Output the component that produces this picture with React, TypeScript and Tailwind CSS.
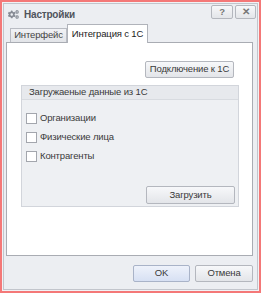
import { FaCogs } from "react-icons/fa";

const txt = "text-[9.5px] tracking-[-0.15px]";

const btn = `flex items-center justify-center whitespace-nowrap rounded-[2px] border border-[#b4b7be] bg-gradient-to-b from-[#f7f8fa] to-[#e3e5e9] text-[#3a3a3a] ${txt}`;

const Check = ({ label }: { label: string }) => (
  <div className="flex h-[19px] items-center">
    <span className="h-[11px] w-[11px] border border-[#a3a6ad] bg-white" />
    <span className={`ml-[3px] whitespace-nowrap text-[#3a3a3a] ${txt}`}>{label}</span>
  </div>
);

export default function App() {
  return (
    <div
      className="h-[293px] w-[261px] border-2 border-[#f47878] bg-[#f1f2f5] p-px"
      style={{ fontFamily: '"Liberation Sans", Arial, sans-serif' }}
    >
      <div className="flex h-full flex-col border border-[#c2c5cc] bg-[#eceef2]">
        {/* title bar */}
        <div className="flex h-[18px] items-start pl-[4px] pr-px pt-px">
          <div className="mt-[2px] flex items-center">
            <FaCogs className="text-[#868b94]" size={11} />
            <span className="ml-[5px] text-[10px] font-bold tracking-[-0.2px] text-[#50545c]">Настройки</span>
          </div>
          <div className="ml-auto flex gap-[2px]">
            <div className={`${btn} h-[14px] w-[22px] font-bold text-[#777]`}>?</div>
            <div className={`${btn} h-[14px] w-[21px] font-bold text-[#777]`}>✕</div>
          </div>
        </div>

        {/* tabs */}
        <div className="mt-[2px] flex items-end pl-[6px]">
          <div className={`flex h-[14px] w-[57px] items-center justify-center whitespace-nowrap border border-b-0 border-[#b9bcc3] bg-gradient-to-b from-[#f1f2f5] to-[#e2e4e8] text-[#444] ${txt}`}>
            Интерфейс
          </div>
          <div className={`relative z-10 -mb-px flex h-[19px] w-[81px] items-center justify-center whitespace-nowrap border border-b-0 border-[#b0b3ba] bg-white text-[#222] ${txt}`}>
            Интеграция с 1С
          </div>
        </div>

        {/* panel */}
        <div className="ml-[2px] mr-[4px] flex h-[214px] flex-col border border-[#a9acb3] bg-white">
          <div className="ml-[14px] flex w-[218px] flex-col">
            <div className={`${btn} mr-[5px] mt-[18px] h-[17px] w-[89px] self-end`}>Подключение к 1С</div>
            <div className="mt-[7px] flex h-[122px] flex-col border border-[#d2d5db] bg-[#eef0f3]">
              <div className={`flex h-[14px] items-center whitespace-nowrap border-b border-[#d8dbe0] bg-[#e7e9ed] pl-[7px] text-[#3a3a3a] ${txt}`}>
                Загружаеные данные из 1С
              </div>
              <div className="flex flex-1 flex-col pl-[4px] pt-[9px]">
                <Check label="Организации" />
                <Check label="Физические лица" />
                <Check label="Контрагенты" />
                <div className={`${btn} mb-[2px] mr-[3px] mt-auto h-[18px] w-[89px] self-end`}>Загрузить</div>
              </div>
            </div>
          </div>
        </div>

        {/* footer */}
        <div className="flex flex-1 items-start justify-end gap-[5px] pr-[4px] pt-[9px]">
          <div className={`flex h-[17px] w-[57px] items-center justify-center rounded-[2px] border border-[#a9b3c8] bg-gradient-to-b from-[#eef2fb] to-[#d7e0f3] text-[#3a3a3a] ${txt}`}>
            OK
          </div>
          <div className={`${btn} h-[17px] w-[58px]`}>Отмена</div>
        </div>
      </div>
    </div>
  );
}
